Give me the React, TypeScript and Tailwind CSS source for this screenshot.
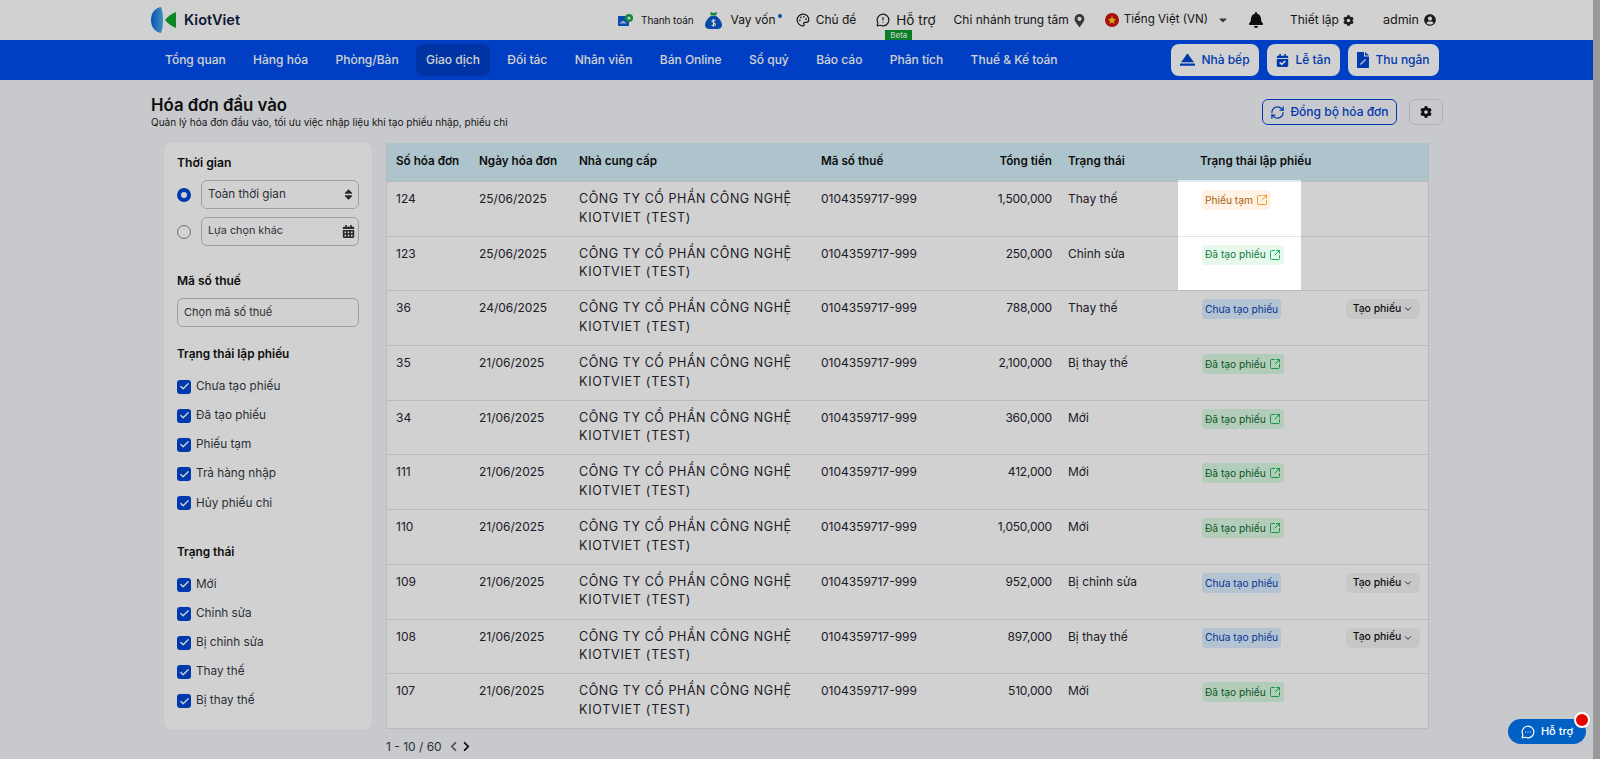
import React from "react";
import { Palette, MessageCircleWarning, RefreshCw, SquareArrowOutUpRight, ChevronDown, MessageCircleMore, Check } from "lucide-react";
import { FaBell, FaMapMarkerAlt, FaUserCircle, FaCog, FaCaretDown, FaSort, FaCalendarAlt, FaCalendarCheck, FaChevronLeft, FaChevronRight } from "react-icons/fa";

const navItems = ["Tổng quan", "Hàng hóa", "Phòng/Bàn", "Giao dịch", "Đối tác", "Nhân viên", "Bán Online", "Sổ quỷ", "Báo cáo", "Phân tích", "Thuế & Kế toán"];
const company = ["CÔNG TY CỔ PHẦN CÔNG NGHỆ", "KIOTVIET (TEST)"];
type Status = "temp" | "done" | "none";
const rows: [string, string, string, string, Status][] = [
  ["124", "25/06/2025", "1,500,000", "Thay thế", "temp"],
  ["123", "25/06/2025", "250,000", "Chỉnh sửa", "done"],
  ["36", "24/06/2025", "788,000", "Thay thế", "none"],
  ["35", "21/06/2025", "2,100,000", "Bị thay thế", "done"],
  ["34", "21/06/2025", "360,000", "Mới", "done"],
  ["111", "21/06/2025", "412,000", "Mới", "done"],
  ["110", "21/06/2025", "1,050,000", "Mới", "done"],
  ["109", "21/06/2025", "952,000", "Bị chỉnh sửa", "none"],
  ["108", "21/06/2025", "897,000", "Bị thay thế", "none"],
  ["107", "21/06/2025", "510,000", "Mới", "done"],
];
const gridCols = "grid grid-cols-[83px_100px_242px_148px_99px_133px_1fr]";

function Logo() {
  return (
    <svg width="26" height="26" viewBox="0 0 26 26">
      <defs>
        <linearGradient id="kv" x1="0" y1="0" x2="1" y2="0">
          <stop offset="0" stopColor="#0a62d8" />
          <stop offset="1" stopColor="#4fb2ea" />
        </linearGradient>
      </defs>
      <path d="M10 0 C4 1 0 6 0 13 C0 20 4 25 10 26 C11.5 22 12 18 12 13 C12 8 11.5 4 10 0Z" fill="url(#kv)" />
      <path d="M25 5 L25 21 C20.5 19.5 17 16.5 14 13 C17 9.5 20.5 6.5 25 5Z" fill="#12a52c" />
    </svg>
  );
}

function PayIcon() {
  return (
    <svg width="15" height="12" viewBox="0 0 15 12">
      <path d="M0 3 C0 2.4 .4 2 1 2 H11 V11 C11 11.6 10.6 12 10 12 H1 C.4 12 0 11.6 0 11Z" fill="#0a5bd0" />
      <path d="M1 9.5 L5 6.5 L9 9.5Z" fill="#bcd3f5" />
      <circle cx="11" cy="4" r="4" fill="#19a64a" />
      <circle cx="11" cy="4" r="1.6" fill="#e6f7ec" />
    </svg>
  );
}

function BagIcon() {
  return (
    <svg width="17" height="17" viewBox="0 0 17 17">
      <path d="M5 0 L8.5 1 L12 0 L11 3.5 H6Z" fill="#15a34a" />
      <path d="M6 4 H11 C14 6 17 9.5 17 13 C17 15.5 15 17 12.5 17 H4.5 C2 17 0 15.5 0 13 C0 9.5 3 6 6 4Z" fill="#0a5bd0" />
      <path d="M10.5 8.5 C9.5 7.7 7 7.7 7 9.3 C7 11 10.5 10.5 10.5 12.3 C10.5 13.8 8 13.8 6.7 13 M8.6 7 V14.8" stroke="#fff" strokeWidth="1.1" fill="none" />
    </svg>
  );
}

function Flag() {
  return (
    <svg width="14" height="14" viewBox="0 0 14 14">
      <circle cx="7" cy="7" r="7" fill="#d0100f" />
      <path d="M7 2.8 L8.2 5.8 L11.3 5.9 L8.9 7.9 L9.7 11 L7 9.3 L4.3 11 L5.1 7.9 L2.7 5.9 L5.8 5.8Z" fill="#fcd116" />
    </svg>
  );
}

function BellConcierge() {
  return (
    <svg width="15" height="12" viewBox="0 0 15 12" fill="#0046d5">
      <path d="M7.5 0 C8.3 0 8.8 .6 8.8 1.2 L14 8.3 H1 L6.2 1.2 C6.2 .6 6.7 0 7.5 0Z" />
      <rect x="0" y="9.5" width="15" height="2.3" rx=".6" />
    </svg>
  );
}

function FileIcon() {
  return (
    <svg width="12" height="16" viewBox="0 0 12 16" fill="#0046d5">
      <path d="M0 1 C0 .4 .4 0 1 0 H7 V4.5 H12 V15 C12 15.6 11.6 16 11 16 H1 C.4 16 0 15.6 0 15Z" />
      <path d="M8 0 L12 3.6 H8Z" />
      <path d="M3.4 12.6 L8.5 7.4" stroke="#d9e2f5" strokeWidth="1.4" />
    </svg>
  );
}

function Badge({ status, lit }: { status: Status; lit: boolean }) {
  if (status === "temp")
    return (
      <span className="flex h-5 items-center gap-[3px] rounded bg-[#fff2e6] pl-[3px] pr-[3px] text-[10.2px] text-[#a8640c]">
        Phiếu tạm <SquareArrowOutUpRight size={12} className="text-[#f59a23]" />
      </span>
    );
  if (status === "done")
    return (
      <span className={`flex h-5 items-center gap-[3px] rounded pl-[3px] pr-[3px] text-[10.2px] ${lit ? "bg-[#e7f8ed] text-[#0f7a3a]" : "bg-[#dcfae3] text-[#0b6b2f]"}`}>
        Đã tạo phiếu <SquareArrowOutUpRight size={12} className="text-[#16b858]" />
      </span>
    );
  return <span className="flex h-5 items-center rounded bg-[#dbeeff] px-[3px] text-[10.2px] text-[#0a42b5]">Chưa tạo phiếu</span>;
}

function CheckRow({ label }: { label: string }) {
  return (
    <div className="flex h-[29.2px] items-center gap-[5px]">
      <span className="flex h-[14px] w-[14px] items-center justify-center rounded-[3px] bg-[#0046d5]">
        <Check size={11} strokeWidth={3} className="text-white" />
      </span>
      <span className="text-[11.75px] text-[#333a45]">{label}</span>
    </div>
  );
}

function Filters() {
  return (
    <aside className="flex h-[586px] w-[208px] shrink-0 flex-col rounded-lg bg-white px-[13px] pt-3 text-[11.7px] text-[#111]">
      <div className="text-[12.2px] font-semibold leading-4">Thời gian</div>
      <div className="mt-[9px] flex h-[29px] items-center gap-[10px]">
        <span className="flex h-[14px] w-[14px] items-center justify-center rounded-full bg-[#0046d5]">
          <span className="h-[6px] w-[6px] rounded-full bg-white" />
        </span>
        <div className="flex h-[29px] flex-1 items-center justify-between rounded-md border border-[#c4c4c4] pl-[6px] pr-[3px] text-[#333a45]">
          Toàn thời gian <FaSort size={13} className="text-[#333]" />
        </div>
      </div>
      <div className="mt-[8px] flex h-[29px] items-center gap-[10px]">
        <span className="h-[14px] w-[14px] rounded-full border border-[#888]" />
        <div className="flex h-[29px] flex-1 items-center justify-between rounded-md border border-[#c4c4c4] pl-[6px] pr-[3px] text-[10.8px] text-[#333a45]">
          Lựa chọn khác <FaCalendarAlt size={13} className="text-[#333]" />
        </div>
      </div>
      <div className="mt-[27px] text-[12px] font-semibold leading-4">Mã số thuế</div>
      <div className="mt-[9px] flex h-[29px] items-center rounded-md border border-[#c4c4c4] px-[6px] text-[11px] text-[#333a45]">Chọn mã số thuế</div>
      <div className="mt-[19px] text-[11.8px] font-semibold leading-4">Trạng thái lập phiếu</div>
      <div className="mt-[10px]">
        {["Chưa tạo phiếu", "Đã tạo phiếu", "Phiếu tạm", "Trả hàng nhập", "Hủy phiếu chi"].map((l) => (
          <CheckRow key={l} label={l} />
        ))}
      </div>
      <div className="mt-[26px] text-[11.8px] font-semibold leading-4">Trạng thái</div>
      <div className="mt-[10px]">
        {["Mới", "Chỉnh sửa", "Bị chỉnh sửa", "Thay thế", "Bị thay thế"].map((l) => (
          <CheckRow key={l} label={l} />
        ))}
      </div>
    </aside>
  );
}

function InvoiceTable() {
  return (
    <div className="relative w-[1043px] shrink-0 self-start">
      <div className="border-x border-b border-[#e3e3e3] bg-white text-[12px] text-[#1f2530]">
        <div className={`${gridCols} h-[38px] items-center bg-[#d5f0fa] text-[11.7px] font-semibold text-[#111]`}>
          <div className="pl-[9px]">Số hóa đơn</div>
          <div className="pl-[9px]">Ngày hóa đơn</div>
          <div className="pl-[9px]">Nhà cung cấp</div>
          <div className="pl-[9px]">Mã số thuế</div>
          <div className="pr-[7px] text-right">Tổng tiền</div>
          <div className="pl-[9px]">Trạng thái</div>
          <div className="pl-[8px]">Trạng thái lập phiếu</div>
        </div>
        {rows.map((r, i) => (
          <div key={r[0]} className={`${gridCols} h-[54.7px] border-t border-[#e3e3e3] pt-[8px] leading-[18.5px]`}>
            <div className="pl-[9px]">{r[0]}</div>
            <div className="pl-[9px]">{r[1]}</div>
            <div className="pl-[9px] text-[12.5px]">
              <div className="tracking-[0.55px]">{company[0]}</div>
              <div className="tracking-[0.75px]">{company[1]}</div>
            </div>
            <div className="pl-[9px]">0104359717-999</div>
            <div className="pr-[7px] text-right tracking-[-0.2px]">{r[2]}</div>
            <div className="pl-[9px]">{r[3]}</div>
            <div className="flex items-start justify-between pl-[10px] pr-[8px]">
              <Badge status={r[4]} lit={i < 2} />
              {r[4] === "none" && (
                <span className="flex h-5 w-[74px] items-center justify-center gap-[2px] rounded-md bg-[#f3f3f5] text-[10.4px] font-medium text-[#111]">
                  Tạo phiếu <ChevronDown size={10} />
                </span>
              )}
            </div>
          </div>
        ))}
      </div>
      <div className="mt-[8px] flex h-[20px] items-center text-[12px] text-[#333a45]">
        <span>1 - 10 / 60</span>
        <FaChevronLeft size={11} className="ml-[6px] text-[#666]" />
        <FaChevronRight size={11} className="ml-[2px] text-[#111]" />
      </div>
      {/* guided-tour spotlight over the first two status cells */}
      <div className="pointer-events-none absolute left-[792px] top-[37px] h-[110px] w-[123px] shadow-[0_0_0_3000px_rgba(0,0,0,0.18)]" />
    </div>
  );
}

export default function App() {
  return (
    <div className="relative flex h-[759px] w-[1600px] overflow-hidden bg-[#f5f6f9] font-['Inter','Liberation_Sans',sans-serif]">
      <div className="w-[1593px] shrink-0">
        <header className="flex h-[40px] items-center bg-white pl-[151px] pr-[157px] text-[12px] text-[#1a1a1a]">
          <div className="flex items-center gap-[7px]">
            <Logo />
            <span className="text-[14.5px] font-semibold text-[#10203f]">KiotViet</span>
          </div>
          <div className="ml-auto flex items-center">
            <PayIcon />
            <span className="ml-2 text-[10px] tracking-[-0.1px]">Thanh toán</span>
            <span className="ml-[12px]"><BagIcon /></span>
            <span className="ml-2">Vay vốn</span>
            <span className="mb-2 ml-[2px] h-1 w-1 rounded-full bg-[#0a5bd0]" />
            <Palette size={14} className="ml-[14px]" />
            <span className="ml-[6px]">Chủ đề</span>
            <span className="relative ml-5 flex items-center">
              <MessageCircleWarning size={14} />
              <span className="ml-[6px] text-[13.5px]">Hỗ trợ</span>
              <span className="absolute left-[9px] top-[20px] flex h-[10px] w-[27px] items-center justify-center bg-[#0b9a2c] text-[8px] leading-none text-white">Beta</span>
            </span>
            <span className="ml-[18px]">Chi nhánh trung tâm</span>
            <FaMapMarkerAlt size={13} className="ml-[4px] text-[#444]" />
            <span className="ml-[19px]"><Flag /></span>
            <span className="ml-[5px] text-[11.6px]">Tiếng Việt (VN)</span>
            <FaCaretDown size={12} className="ml-[9px] text-[#444]" />
            <FaBell size={16} className="ml-[19px] text-[#111]" />
            <span className="ml-[26px]">Thiết lập</span>
            <FaCog size={11} className="ml-1 text-[#222]" />
            <span className="ml-[29px] text-[12.5px]">admin</span>
            <FaUserCircle size={12} className="ml-[5px] text-[#222]" />
          </div>
        </header>
        <nav className="flex h-[40px] items-center bg-[#004eef] pl-[155px] pr-[154px]">
          <div className="flex items-center gap-[7.4px]">
            {navItems.map((n) => (
              <a key={n} className={`flex h-8 items-center rounded-lg px-[10px] text-[12px] font-medium text-white ${n === "Giao dịch" ? "bg-[#0040c8]" : ""}`}>
                {n}
              </a>
            ))}
          </div>
          <div className="ml-auto flex items-center gap-2 text-[12px] font-medium text-[#0046d5]">
            <button className="flex h-8 w-[88px] items-center justify-center gap-[6px] rounded-lg bg-white"><BellConcierge />Nhà bếp</button>
            <button className="flex h-8 w-[73px] items-center justify-center gap-[6px] rounded-lg bg-white"><FaCalendarCheck size={13} />Lễ tân</button>
            <button className="flex h-8 w-[91px] items-center justify-center gap-[6px] rounded-lg bg-white"><FileIcon />Thu ngân</button>
          </div>
        </nav>
        <main className="pl-[151px] pr-[150px]">
          <div className="flex h-[63px] items-start justify-between pt-[15px]">
            <div>
              <h1 className="text-[16.8px] font-semibold leading-5 text-[#111]">Hóa đơn đầu vào</h1>
              <p className="text-[10px] leading-[15px] text-[#222]">Quản lý hóa đơn đầu vào, tối ưu việc nhập liệu khi tạo phiếu nhập, phiếu chi</p>
            </div>
            <div className="flex items-center gap-3 pt-[4px]">
              <button className="flex h-[26px] w-[135px] items-center justify-center gap-[5px] rounded-md border border-[#0046d5] text-[12px] font-medium text-[#0046d5]">
                <RefreshCw size={15} />Đồng bộ hóa đơn
              </button>
              <button className="flex h-[26px] w-[34px] items-center justify-center rounded-md border border-[#d6d6d6]">
                <FaCog size={12} className="text-[#111]" />
              </button>
            </div>
          </div>
          <div className="flex gap-[14px] pl-[13px]">
            <Filters />
            <InvoiceTable />
          </div>
        </main>
      </div>
      <div className="w-[7px] shrink-0 bg-[#bbbbbb]" />
      <button className="absolute left-[1508px] top-[719px] flex h-[25px] w-[78px] items-center justify-center gap-[6px] rounded-full bg-[#0060c4] text-[11px] font-medium text-white">
        <MessageCircleMore size={14} />Hỗ trợ
        <span className="absolute left-[66px] top-[-7px] h-[16px] w-[16px] rounded-full border-2 border-white bg-[#e80000]" />
      </button>
    </div>
  );
}
